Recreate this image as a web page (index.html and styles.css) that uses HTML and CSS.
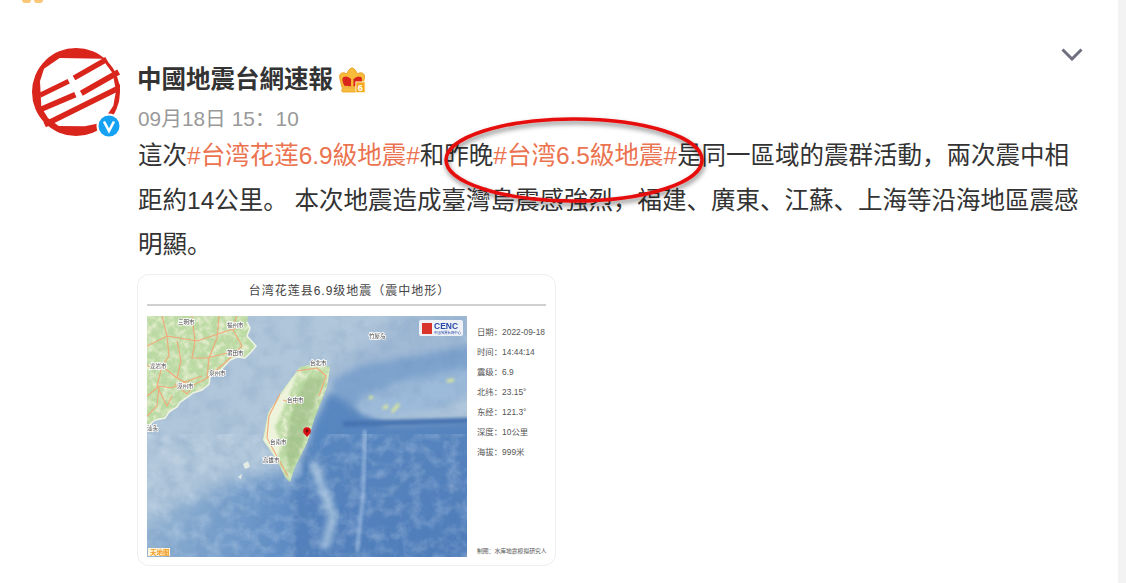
FILE: index.html
```html
<!DOCTYPE html>
<html lang="zh-CN">
<head>
  <meta charset="UTF-8">
  <title>中國地震台網速報</title>
  <link rel="stylesheet" href="styles.css">
</head>
<body>
<div class="page">
  <main class="feed">
    <!-- bit of the previous post's emoji, cut off by the top edge -->
    <div class="top-strip"><span class="emoji-cut"></span><span class="emoji-cut"></span></div>

    <article class="post">
      <div class="avatar">
        <svg class="avatar-logo" viewBox="12 12 264 264" width="88" height="88">
          <circle cx="144" cy="144" r="132" fill="#d9251c"/>
          <path d="M48 74 L95 42 L222 44 L254 88 L264 140 L256 185 L222 236 L170 247 L92 246 L60 222 L40 190 L36 112 Z" fill="#fff"/>
          <g stroke="#d9251c" fill="none">
            <path d="M138 102 L236 46" stroke-width="16"/>
            <path d="M36 154 L122 112" stroke-width="15"/>
            <path d="M160 148 L272 84" stroke-width="17"/>
            <path d="M34 198 L142 152" stroke-width="17"/>
            <path d="M50 242 L280 128" stroke-width="17"/>
          </g>
        </svg>
        <svg class="avatar-v" viewBox="0 0 26 26" width="26" height="26">
          <circle cx="13" cy="13" r="12.5" fill="#fff"/>
          <circle cx="13" cy="13" r="10.5" fill="#15a2f2"/>
          <path d="M8 8.5 L13 18 L18 8.5" fill="none" stroke="#fff" stroke-width="2.6"/>
        </svg>
      </div>

      <div class="post-body">
        <div class="post-head">
          <div>
            <div class="name-row">
              <span class="name">中國地震台網速報</span>
              <svg class="crown" viewBox="4 5 28 27" width="27" height="26">
                <path d="M7 26 L4.7 16 Q4 11 9 11 L12 12 Q14 7 17.5 5.7 Q21 7 23 12 L26 11 Q31 11 30.5 16 L28 26 Z" fill="#f8bb3a" stroke="#eb9f24" stroke-width="1"/>
                <rect x="7" y="27" width="19" height="4" rx="1" fill="#f8bb3a" stroke="#eb9f24" stroke-width="0.8"/>
                <path d="M9.5 24.5 Q6 18 8.5 15.5 Q13 13.5 16.5 17.5 L16.5 25 Z" fill="#d9261c"/>
                <path d="M19 17.5 Q23 13.5 27 15.5 Q29 18 26.5 24.5 L19 25 Z" fill="#d9261c"/>
                <rect x="21.5" y="20.5" width="9.5" height="11" fill="#f6a821" stroke="#fff0c4" stroke-width="1"/>
                <text x="26.2" y="29.5" class="crown-num">6</text>
              </svg>
            </div>
            <div class="date">09月18日 15：10</div>
          </div>
          <svg class="chevron" viewBox="0 0 22 13" width="22" height="13">
            <path d="M1.5 1.5 L11 11 L20.5 1.5" fill="none" stroke="#6e7080" stroke-width="3"/>
          </svg>
        </div>

        <p class="post-text">這次<span class="tag">#台湾花莲6.9級地震#</span>和昨晚<span class="tag">#台湾6.5級地震#</span>是同一區域的震群活動，兩次震中相距約14公里。 本次地震造成臺灣島震感強烈，福建、廣東、江蘇、上海等沿海地區震感明顯。</p>

        <div class="quake-card">
          <div class="quake-title">台湾花莲县6.9级地震（震中地形）</div>
          <div class="quake-content">
            <svg class="quake-map" viewBox="0 0 320 241" width="320" height="241">
              <defs>
                <linearGradient id="west-deep" x1="0" y1="0" x2="1" y2="0.2">
                  <stop offset="0" stop-color="#a3bed6"/>
                  <stop offset="0.5" stop-color="#7ea4cd"/>
                  <stop offset="1" stop-color="#5c8bc5"/>
                </linearGradient>
                <linearGradient id="east-deep" x1="0" y1="0" x2="0.4" y2="1">
                  <stop offset="0" stop-color="#5a89c2"/>
                  <stop offset="1" stop-color="#4f7dba"/>
                </linearGradient>
                <filter id="blur1" x="-20%" y="-20%" width="140%" height="140%"><feGaussianBlur stdDeviation="1.5"/></filter>
                <filter id="blur3" x="-30%" y="-30%" width="160%" height="160%"><feGaussianBlur stdDeviation="3.5"/></filter>
                <filter id="blur8" x="-30%" y="-30%" width="160%" height="160%"><feGaussianBlur stdDeviation="9"/></filter>
                <filter id="grain-dark">
                  <feTurbulence type="fractalNoise" baseFrequency="0.06" numOctaves="4" seed="4"/>
                  <feColorMatrix values="0 0 0 0 0.12  0 0 0 0 0.25  0 0 0 0 0.45  1.8 0 0 0 -0.7"/>
                </filter>
                <filter id="grain-light">
                  <feTurbulence type="fractalNoise" baseFrequency="0.08" numOctaves="4" seed="11"/>
                  <feColorMatrix values="0 0 0 0 0.85  0 0 0 0 0.92  0 0 0 0 0.98  1.8 0 0 0 -0.72"/>
                </filter>
                <filter id="grain-land">
                  <feTurbulence type="fractalNoise" baseFrequency="0.14" numOctaves="3" seed="7"/>
                  <feColorMatrix values="0 0 0 0 0.96  0 0 0 0 0.95  0 0 0 0 0.78  2.4 0 0 0 -0.95"/>
                </filter>
                <filter id="grain-hill">
                  <feTurbulence type="fractalNoise" baseFrequency="0.2" numOctaves="3" seed="21"/>
                  <feColorMatrix values="0 0 0 0 0.36  0 0 0 0 0.5  0 0 0 0 0.28  2.4 0 0 0 -1"/>
                </filter>
                <clipPath id="land-clip">
                  <path d="M0 0 L101 0 L100 6 L103 12 L100 20 L109 30 L104 36 L98 42 L90 41 L83 44 L74 54 L63 61 L62 68 L55 74 L46 77 L41 81 L33 86 L30 91 L22 96 L18 102 L8 104 L0 111 Z"/>
                  <path d="M153 51 Q168 46 183 51 L180 71 L168 101 L160 127 L148 151 L143 166 L138 161 L130 144 L116 124 L121 97 L136 74 Z"/>
                </clipPath>
              </defs>

              <!-- sea floor -->
              <rect width="320" height="241" fill="#b0c6da"/>
              <path d="M190 50 L230 20 L270 -10 L330 -10 L330 60 L210 80 Z" fill="#a0b9d5" filter="url(#blur8)"/>
              <path d="M184 64 L212 50 L330 28 L330 64 L262 78 L215 88 L186 96 Z" fill="#7ea3cd" filter="url(#blur3)"/>
              <path d="M-20 260 L-20 215 L45 182 L100 160 L140 156 L160 170 L160 260 Z" fill="url(#west-deep)" filter="url(#blur8)"/>
              <path d="M168 104 L182 76 L212 94 L240 108 L330 104 L330 260 L140 260 L146 172 L158 132 Z" fill="url(#east-deep)" filter="url(#blur3)"/>
              <path d="M212 82 L250 66 L330 50 L330 76 L292 94 L240 101 L214 98 Z" fill="#9cbad9" filter="url(#blur3)"/>
              <path d="M196 105 L330 102 L330 107 L196 111 Z" fill="#4673b1" filter="url(#blur1)"/>
              <path d="M218 114 L216 180 L210 236" fill="none" stroke="#9dbce0" stroke-width="3.5" filter="url(#blur1)" opacity="0.8"/>
              <path d="M166 145 L176 175 L186 200 L178 232" fill="none" stroke="#a8c4de" stroke-width="8" filter="url(#blur3)"/>
              <rect width="320" height="241" filter="url(#grain-dark)" opacity="0.22"/>
              <rect y="130" width="320" height="111" filter="url(#grain-light)" opacity="0.28"/>

              <!-- land -->
              <g clip-path="url(#land-clip)">
                <rect width="190" height="170" fill="#bddca5"/>
                <rect width="190" height="170" filter="url(#grain-land)" opacity="0.7"/>
                <rect width="190" height="170" filter="url(#grain-hill)" opacity="0.2"/>
                <path d="M160 62 L176 62 L164 100 L152 138 L143 155 L138 130 L146 92 Z" fill="#9aba82" opacity="0.6" filter="url(#blur1)"/>
                <path d="M153 51 L136 74 L121 97 L116 124 L130 144 L134 130 L128 110 L140 84 Z" fill="#eef4dc" filter="url(#blur1)"/>
              </g>
              <path d="M100 6 L103 12 L100 20 L109 30 L104 36 L98 42 L90 41 L83 44 L74 54 L63 61 L62 68 L55 74 L46 77 L41 81 L33 86 L30 91 L22 96 L18 102 L8 104 L0 111" fill="none" stroke="#eef3e6" stroke-width="1.5"/>
              <!-- islands -->
              <path d="M96 148 L101 145 L103 151 L98 153 Z M91 161 L95 158 L94 163 Z" fill="#e2ebe4"/>
              <path d="M236 92 L241 90 M245 96 L252 88 M300 65 L307 64 M222 82 L226 81" stroke="#dbe89a" stroke-width="3" fill="none" filter="url(#blur1)"/>

              <!-- roads -->
              <g fill="none" stroke="#f2a878" stroke-width="1.1">
                <path d="M0 50 L15 50 L30 62 L45 70 L60 62 L80 45 L95 30 L85 12 L90 0"/>
                <path d="M15 0 L20 20 L50 25 L95 10"/>
                <path d="M0 30 L20 20 L22 40 L15 50"/>
                <path d="M45 0 L48 25 L45 42 L60 42 L80 37"/>
                <path d="M0 80 L12 70 L25 72 L35 67 L55 60"/>
                <path d="M15 50 L10 70 L20 90 L25 80"/>
                <path d="M28 68 L40 78 L45 72"/>
                <path d="M72 0 L70 22 L62 42 L60 62"/>
                <path d="M30 25 L34 45 L30 62"/>
                <path d="M0 100 L10 90 L12 70"/>
                <path d="M150 55 L170 52 L179 60 L172 80"/>
                <path d="M133 78 L122 100 L120 122 L133 146 L141 160"/>
                <path d="M136 84 L150 88"/>
              </g>

              <!-- city labels -->
              <g class="map-label">
                <text x="31" y="8">三明市</text>
                <text x="80" y="11">福州市</text>
                <text x="80" y="39">莆田市</text>
                <text x="62" y="59">泉州市</text>
                <text x="3" y="52">龙岩市</text>
                <text x="30" y="72">漳州市</text>
                <text x="0" y="114">汕头</text>
                <text x="163" y="49">台北市</text>
                <text x="140" y="86">台中市</text>
                <text x="123" y="128">台南市</text>
                <text x="116" y="146">高雄市</text>
                <text x="222" y="22">竹屋岛</text>
              </g>

              <!-- epicentre -->
              <circle cx="160" cy="115" r="3.8" fill="#d80f14"/>
              <path d="M157.5 118 L160 121 L162.5 118 Z" fill="#d80f14"/>
              <circle cx="160" cy="115" r="1.4" fill="#6b0a0c"/>

              <!-- agency logo -->
              <rect x="272" y="4" width="44" height="16" rx="2" fill="#eef2f6"/>
              <rect x="275" y="7" width="10" height="11" fill="#d9342a"/>
              <text x="287" y="13" class="cenc">CENC</text>
              <text x="287" y="17.5" class="cenc-sub">中国地震台网中心</text>

              <rect x="1" y="232" width="22" height="8" fill="#fff3d8"/>
              <text x="3" y="239" class="map-mark">天地图</text>
            </svg>

            <div class="quake-info">
              <div>日期：2022-09-18</div>
              <div>时间：14:44:14</div>
              <div>震级：6.9</div>
              <div>北纬：23.15°</div>
              <div>东经：121.3°</div>
              <div>深度：10公里</div>
              <div>海拔：999米</div>
              <div class="quake-note">制图：水库地震模拟研究人</div>
            </div>
          </div>
        </div>
      </div>
    </article>
  </main>
  <div class="scroll-gutter"></div>
</div>

<!-- hand drawn circle somebody put over the screenshot -->
<svg class="marker" viewBox="0 0 270 96" width="270" height="96">
  <defs>
    <filter id="marker-shadow" x="-10%" y="-20%" width="120%" height="150%">
      <feDropShadow dx="1" dy="3" stdDeviation="2.5" flood-color="#000" flood-opacity="0.5"/>
    </filter>
  </defs>
  <ellipse cx="135" cy="46" rx="128" ry="41" fill="none" stroke="#e60a0a" stroke-width="3.5" filter="url(#marker-shadow)"/>
</svg>
</body>
</html>
```

FILE: styles.css
```css
* {
  box-sizing: border-box;
}
html, body {
  height: 100%;
}
body {
  margin: 0;
  background: #fff;
  color: #333;
  font-family: "Liberation Sans", "Noto Sans CJK SC", sans-serif;
  overflow: hidden;
}

.page {
  display: flex;
  height: 583px;
  overflow: hidden;
}
.feed {
  flex: 1;
  min-width: 0;
}
.scroll-gutter {
  width: 8px;
  background: #f3f3f3;
}

.top-strip {
  display: flex;
  gap: 3px;
  height: 4px;
  padding-left: 22px;
}
.emoji-cut {
  display: block;
  width: 9px;
  height: 3px;
  border-radius: 0 0 6px 6px;
  background: #f9c777;
}

/* Post */
.post {
  display: flex;
  padding: 44px 0 0 32px;
}
.avatar {
  position: relative;
  flex: none;
  width: 88px;
  height: 88px;
  margin-right: 18px;
}
.avatar-logo {
  display: block;
}
.avatar-v {
  position: absolute;
  right: -2px;
  bottom: -3px;
}
.post-body {
  flex: 1;
  min-width: 0;
}
.post-head {
  display: flex;
  justify-content: space-between;
  align-items: flex-start;
  padding-right: 35px;
}
.name-row {
  display: flex;
  align-items: center;
  gap: 6px;
  height: 30px;
  margin-top: 17px;
}
.name {
  margin-left: -1px;
  font-size: 24.5px;
  font-weight: 700;
  line-height: 30px;
  color: #333;
}
.crown {
  flex: none;
}
.crown-num {
  font-size: 9.5px;
  font-weight: 700;
  fill: #fff;
  text-anchor: middle;
}
.date {
  margin-top: 11px;
  font-size: 20.8px;
  line-height: 26px;
  color: #999;
}
.chevron {
  flex: none;
}

.post-text {
  width: 950px;
  margin: 2px 0 0;
  font-size: 24.5px;
  line-height: 44.5px;
  color: #333;
}
.tag {
  color: #eb7350;
}

/* Earthquake image */
.quake-card {
  width: 419px;
  height: 292px;
  margin: 6px 0 0 -1px;
  padding: 0 9px;
  border: 1px solid #eee;
  border-radius: 12px;
  background: #fff;
}
.quake-title {
  height: 31px;
  padding: 2px 0 0 6px;
  border-bottom: 2px solid #d0d0d0;
  font-size: 12px;
  line-height: 28px;
  letter-spacing: 1px;
  text-align: center;
  color: #444;
}
.quake-content {
  display: flex;
  margin-top: 10px;
}
.quake-map {
  display: block;
  flex: none;
  filter: blur(0.45px);
}
.quake-info {
  display: flex;
  flex-direction: column;
  height: 241px;
  padding: 6px 0 0 10px;
  font-size: 8.4px;
  line-height: 20px;
  color: #555;
  white-space: nowrap;
}
.quake-note {
  margin-top: auto;
  font-size: 5.8px;
  line-height: 12px;
}

.map-label text {
  font-size: 5.5px;
  fill: #444;
  paint-order: stroke;
  stroke: #fff;
  stroke-width: 1.5px;
}
.cenc {
  font-size: 8.5px;
  font-weight: 700;
  fill: #2a4aa8;
}
.cenc-sub {
  font-size: 3.4px;
  fill: #2a4aa8;
}
.map-mark {
  font-size: 6.5px;
  font-weight: 700;
  fill: #f09a1e;
}

/* sits over the text, not part of the layout */
.marker {
  position: absolute;
  left: 439px;
  top: 114px;
  pointer-events: none;
}
```
